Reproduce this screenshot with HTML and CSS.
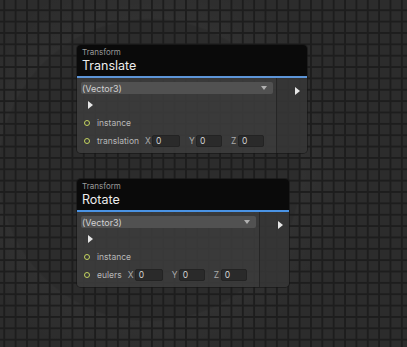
FILE: index.html
```html
<!DOCTYPE html>
<html>
<head>
<meta charset="utf-8">
<link rel="stylesheet" href="styles.css">
</head>
<body>
<div class="canvas">
  <div class="node n1">
    <div class="head">
      <div class="cat">Transform</div>
      <div class="title">Translate</div>
    </div>
    <div class="body">
      <div class="main">
        <div class="dropdown"><span>(Vector3)</span><span class="caret"></span></div>
        <div class="row"><span class="tri"></span></div>
        <div class="row"><span class="port"></span><span class="lbl">instance</span></div>
        <div class="row"><span class="port"></span><span class="lbl">translation</span>
          <span class="ax">X</span><span class="inp wide">0</span>
          <span class="ax">Y</span><span class="inp">0</span>
          <span class="ax">Z</span><span class="inp">0</span>
        </div>
      </div>
      <div class="side"><span class="tri"></span></div>
    </div>
  </div>

  <div class="node n2">
    <div class="head">
      <div class="cat">Transform</div>
      <div class="title">Rotate</div>
    </div>
    <div class="body">
      <div class="main">
        <div class="dropdown"><span>(Vector3)</span><span class="caret"></span></div>
        <div class="row"><span class="tri"></span></div>
        <div class="row"><span class="port"></span><span class="lbl">instance</span></div>
        <div class="row"><span class="port"></span><span class="lbl">eulers</span>
          <span class="ax">X</span><span class="inp wide">0</span>
          <span class="ax">Y</span><span class="inp">0</span>
          <span class="ax">Z</span><span class="inp">0</span>
        </div>
      </div>
      <div class="side"><span class="tri"></span></div>
    </div>
  </div>
</div>
</body>
</html>
```

FILE: styles.css
```css
html, body {
  margin: 0;
  padding: 0;
}
body {
  width: 407px;
  height: 347px;
  overflow: hidden;
  font-family: Inter, "DejaVu Sans", sans-serif;
}
.canvas {
  position: relative;
  width: 407px;
  height: 347px;
  background-color: #2c2c2c;
  background-image:
    linear-gradient(to right, #1d1d1d 1.5px, transparent 1.5px),
    linear-gradient(to bottom, #1d1d1d 1.5px, transparent 1.5px),
    radial-gradient(circle at 150px 170px, transparent 150px, rgba(255,255,255,0.025) 152px, transparent 200px);
  background-size: 11.36px 11.36px, 11.36px 11.36px, 100% 100%;
  background-position: 3.3px 9.3px, 3.3px 9.3px, 0 0;
}
.node {
  position: absolute;
  left: 77px;
  border-radius: 4px;
  overflow: hidden;
  box-shadow: 0 0 0 1px rgba(20,20,20,0.6);
}
.n1 { top: 45px; width: 230px; }
.n2 { top: 179px; width: 212px; }

.head {
  background: #0a0a0a;
  padding-left: 5px;
  border-bottom: 2px solid #4a93e4;
  box-sizing: border-box;
  height: 33px;
}
.n1 .head { border-bottom-color: #5d95d8; }
.cat {
  font-size: 8px;
  color: #9a9a9a;
  line-height: 10px;
  padding-top: 2px;
}
.title {
  font-size: 12.5px;
  color: #ececec;
  line-height: 16px;
  padding-top: 1px;
}
.body {
  display: flex;
}
.main {
  flex: 1;
  background: rgba(60,60,60,0.9);
  padding: 4px 3px 3px 4px;
  border-right: 1px solid rgba(34,34,34,0.8);
}
.side {
  width: 32px;
  background: rgba(54,54,54,0.9);
  position: relative;
}
.side .tri {
  position: absolute;
  left: 18px;
  top: 9px;
}
.dropdown {
  height: 12px;
  background: #515151;
  border-radius: 2px;
  display: flex;
  align-items: center;
  justify-content: space-between;
  padding: 0 6px 0 1px;
  font-size: 9px;
  color: #d2d2d2;
  margin-bottom: 2px;
}
.caret {
  width: 0;
  height: 0;
  border-left: 3px solid transparent;
  border-right: 3px solid transparent;
  border-top: 4px solid #b0b0b0;
}
.row {
  height: 18px;
  display: flex;
  align-items: center;
  font-size: 8.5px;
  color: #b8b8b8;
}
.tri {
  display: block;
  width: 0;
  height: 0;
  border-top: 4px solid transparent;
  border-bottom: 4px solid transparent;
  border-left: 5px solid #e6e6e6;
}
.row .tri { margin-left: 7px; }
.port {
  width: 4px;
  height: 4px;
  border-radius: 50%;
  border: 1.5px solid #c3d35f;
  background: #3a3a3a;
  margin-left: 3px;
  margin-right: 7px;
}
.lbl {
  margin-right: 6px;
}
.ax {
  width: 7px;
  color: #aaaaaa;
}
.inp {
  width: 26px;
  height: 12px;
  box-sizing: border-box;
  background: #2a2a2a;
  border: 1px solid #232323;
  border-radius: 2px;
  color: #d2d2d2;
  font-size: 8.5px;
  line-height: 10px;
  padding-left: 3px;
  margin-right: 9px;
}
.inp.wide { width: 28px; }
```
